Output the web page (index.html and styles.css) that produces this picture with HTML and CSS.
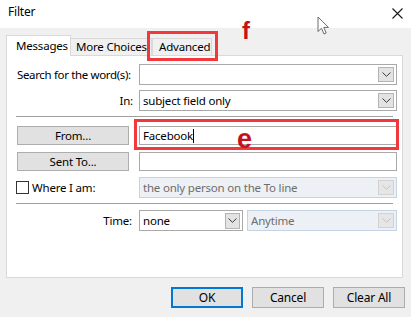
FILE: index.html
```html
<!DOCTYPE html>
<html>
<head>
<meta charset="utf-8">
<link rel="stylesheet" href="styles.css">
</head>
<body>
<div class="window">
  <div class="titlebar">
    <span class="title">Filter</span>
    <svg class="close" width="11" height="11" viewBox="0 0 11 11"><path d="M0.5 0.5L10.5 10.5M10.5 0.5L0.5 10.5" stroke="#1a1a1a" stroke-width="1.1" fill="none"/></svg>
  </div>
  <svg class="cursor" width="14" height="20" viewBox="0 0 14 20"><path d="M1 1L1 15.5L4.5 12.3L7 18L9.2 17L6.8 11.4L11.5 11.4Z" fill="#fff" stroke="#6a6a6a" stroke-width="1" stroke-linejoin="round"/></svg>
  <div class="body">
    <div class="tabs">
      <div class="tab active">Messages</div>
      <div class="tab">More Choices</div>
      <div class="tab">Advanced</div>
      <div class="redbox redbox-tab"></div>
      <span class="mark mark-f">f</span>
    </div>
    <div class="panel">
      <div class="row">
        <span class="lbl">Search for the word(s):</span>
        <div class="field combo wide">
          <span class="val"></span>
          <span class="dd"><svg width="9" height="5" viewBox="0 0 9 5"><path d="M0.5 0.5L4.5 4.3L8.5 0.5" stroke="#3a3a3a" fill="none"/></svg></span>
        </div>
      </div>
      <div class="row gap5">
        <span class="lbl right">In:</span>
        <div class="field combo wide">
          <span class="val">subject field only</span>
          <span class="dd"><svg width="9" height="5" viewBox="0 0 9 5"><path d="M0.5 0.5L4.5 4.3L8.5 0.5" stroke="#3a3a3a" fill="none"/></svg></span>
        </div>
      </div>
      <div class="sep"></div>
      <div class="row short">
        <span class="lbl"><span class="btn small">From...</span></span>
        <div class="field text wide">
          <span class="val">Facebook<span class="caret"></span></span>
          <div class="redbox redbox-input"></div>
          <span class="mark mark-e">e</span>
        </div>
      </div>
      <div class="row short gap7">
        <span class="lbl"><span class="btn small">Sent To...</span></span>
        <div class="field text wide"><span class="val"></span></div>
      </div>
      <div class="row gap6">
        <span class="lbl check"><span class="box"></span>Where I am:</span>
        <div class="field combo wide disabled">
          <span class="val">the only person on the To line</span>
          <span class="dd"><svg width="9" height="5" viewBox="0 0 9 5"><path d="M0.5 0.5L4.5 4.3L8.5 0.5" stroke="#c4c4c4" fill="none"/></svg></span>
        </div>
      </div>
      <div class="sep sep2"></div>
      <div class="row">
        <span class="lbl right time">Time:</span>
        <div class="field combo timesel">
          <span class="val">none</span>
          <span class="dd"><svg width="9" height="5" viewBox="0 0 9 5"><path d="M0.5 0.5L4.5 4.3L8.5 0.5" stroke="#3a3a3a" fill="none"/></svg></span>
        </div>
        <div class="field combo disabled anytime">
          <span class="val">Anytime</span>
          <span class="dd"><svg width="9" height="5" viewBox="0 0 9 5"><path d="M0.5 0.5L4.5 4.3L8.5 0.5" stroke="#c4c4c4" fill="none"/></svg></span>
        </div>
      </div>
    </div>
    <div class="buttons">
      <span class="btn big default">OK</span>
      <span class="btn big">Cancel</span>
      <span class="btn big">Clear All</span>
    </div>
  </div>
</div>
</body>
</html>
```
FILE: styles.css
```css
* { box-sizing: border-box; }
html, body { margin: 0; padding: 0; }
body {
  width: 411px;
  height: 317px;
  overflow: hidden;
  background: #f0f0f0;
  font-family: "Noto Sans", "Open Sans", sans-serif;
  font-size: 11.5px;
  letter-spacing: -0.2px;
  color: #000;
}
.window { position: relative; width: 411px; height: 317px; }
.titlebar {
  height: 28px;
  background: #fff;
  display: flex;
  align-items: flex-start;
  justify-content: space-between;
  padding: 4px 8px 0 8px;
}
.title { line-height: 16px; font-size: 12px; }
.close { margin-top: 4px; }
.cursor { position: absolute; left: 317px; top: 16px; }

.body { padding: 7px 6px 0 6px; }
.tabs {
  position: relative;
  display: flex;
  align-items: flex-end;
  height: 20px;
  z-index: 2;
}
.tab {
  height: 17px;
  line-height: 15px;
  border: 1px solid #d9d9d9;
  border-bottom: none;
  background: #f0f0f0;
  padding: 0 4px 0 5px;
  white-space: nowrap;
}
.tab.active {
  width: 65px;
  height: 21px;
  margin-bottom: -1px;
  background: #fff;
  padding: 2px 0 0 9px;
  line-height: 16px;
}
.tab + .tab { border-left: none; }
.tab:nth-child(2) { width: 81px; }
.tab:nth-child(3) { width: 60px; padding-left: 6px; border-left: 1px solid #d9d9d9; margin-left: 0; }
.redbox {
  position: absolute;
  border: 3px solid #f2373d;
  pointer-events: none;
}
.redbox-tab { left: 141px; top: -4px; width: 71px; height: 30px; }
.mark {
  position: absolute;
  font-family: "Liberation Sans", Arial, sans-serif;
  font-weight: bold;
  color: #c4121c;
  line-height: 1;
  letter-spacing: 0;
}
.mark-f { left: 236px; top: -16px; font-size: 24px; }
.mark-e { left: 97px; top: -1px; font-size: 27px; }

.panel {
  width: 397px;
  height: 223px;
  background: #fff;
  border: 1px solid #d9d9d9;
  padding: 8px 5px 0 9px;
}
.row { display: flex; align-items: center; height: 21px; }
.row.short { height: 19px; }
.gap5 { margin-top: 5px; }
.gap6 { margin-top: 6px; }
.gap7 { margin-top: 7px; }
.lbl {
  width: 123px;
  flex: none;
  white-space: nowrap;
  padding-left: 1px;
}
.lbl.search { letter-spacing: -0.35px; }
.row:first-child .lbl { letter-spacing: -0.35px; }
.lbl.right { text-align: right; padding-right: 6px; }
.lbl.time { padding-right: 7px; }
.lbl.check { display: flex; align-items: center; padding-left: 0; }
.box {
  width: 13px;
  height: 13px;
  border: 1px solid #333;
  background: #fff;
  margin-right: 3px;
}
.sep {
  height: 1px;
  background: #a0a0a0;
  margin: 5px 4px 9px 0;
}
.sep2 { margin: 5px 4px 6px 0; }

.field {
  position: relative;
  height: 100%;
  border: 1px solid #a9a9a9;
  background: #fff;
  display: flex;
  align-items: center;
  padding-left: 3px;
}
.field.wide { flex: 1; }
.val { flex: 1; white-space: nowrap; overflow: hidden; line-height: 16px; }
.caret {
  display: inline-block;
  width: 1px;
  height: 14px;
  background: #000;
  vertical-align: -3px;
}
.dd {
  flex: none;
  width: 16px;
  height: 15px;
  margin-right: 2px;
  background: #e3e3e3;
  border: 1px solid #b4b4b4;
  display: flex;
  align-items: center;
  justify-content: center;
}
.field.disabled {
  background: #edf0f4;
  border-color: #c5d3e6;
  color: #6d6d6d;
}
.field.disabled .dd { background: #e6e6e6; border-color: #d2d2d2; }
.timesel { width: 104px; }
.timesel .dd { width: 15px; height: 16px; }
.anytime { flex: 1; margin-left: 4px; }

.redbox-input { left: -6px; top: -8px; right: -3px; bottom: -6px; }

.btn {
  display: inline-flex;
  align-items: center;
  justify-content: center;
  background: #e1e1e1;
  border: 1px solid #adadad;
  white-space: nowrap;
}
.btn.small { width: 112px; height: 19px; }
.btn.big { width: 72px; height: 21px; font-size: 12px; }
.btn.default { border: 2px solid #0078d7; }
.buttons {
  display: flex;
  justify-content: flex-end;
  gap: 9px;
  margin-top: 9px;
}
```
